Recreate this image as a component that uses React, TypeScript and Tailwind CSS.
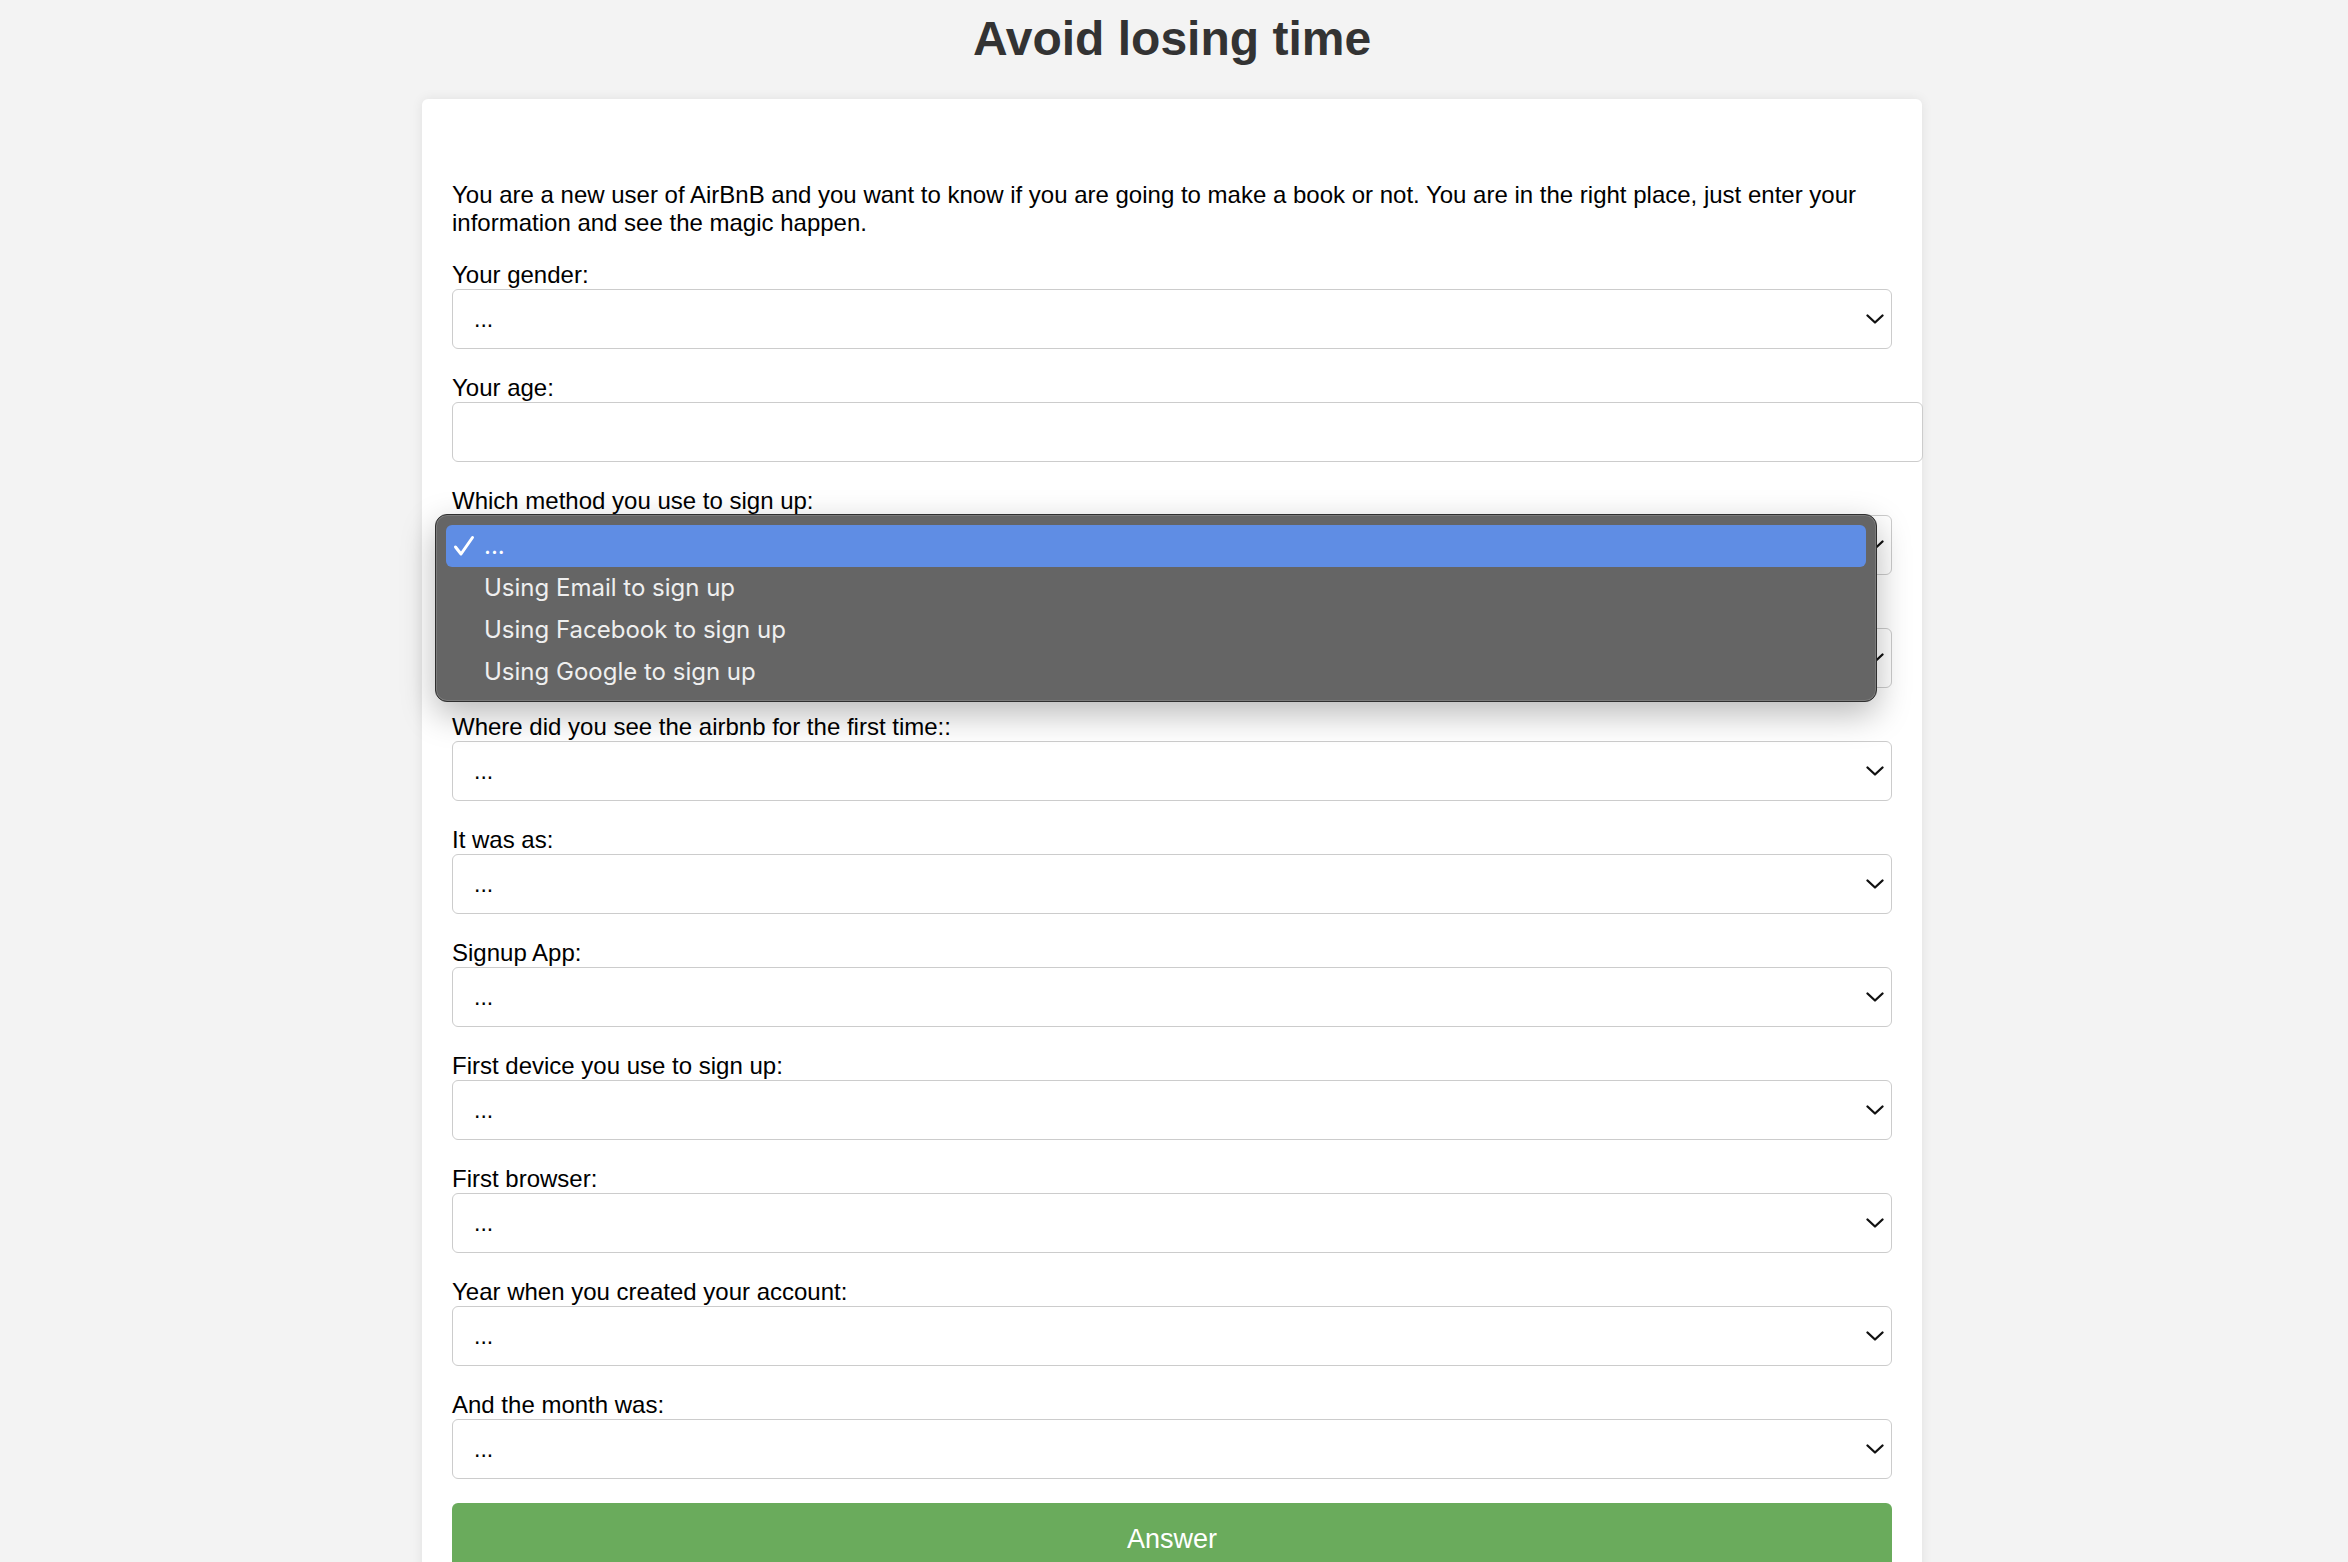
import React from "react";

const Chevron = () => (
  <svg
    width="18"
    height="10"
    viewBox="0 0 18 10"
    className="absolute right-[7px] top-1/2 -translate-y-1/2"
  >
    <path
      d="M1.5 1.5 L9 8.5 L16.5 1.5"
      fill="none"
      stroke="#111"
      strokeWidth="2.3"
      strokeLinecap="round"
      strokeLinejoin="round"
    />
  </svg>
);

const Check = () => (
  <svg width="22" height="22" viewBox="0 0 22 22" className="shrink-0">
    <path
      d="M2.5 12 L8 19 L19.5 2.5"
      fill="none"
      stroke="#fff"
      strokeWidth="3"
      strokeLinecap="round"
      strokeLinejoin="round"
    />
  </svg>
);

const FakeSelect = ({ children }: { children?: React.ReactNode }) => (
  <div className="relative h-[60px] w-full rounded-[6px] border border-[#cccccc] bg-white">
    <div className="flex h-full items-center pl-[21px] text-[23px] text-black">...</div>
    <Chevron />
    {children}
  </div>
);

const Popup = () => {
  const items = ["Using Email to sign up", "Using Facebook to sign up", "Using Google to sign up"];
  return (
    <div
      className="absolute left-[-18px] top-[-2px] z-10 w-[1442px] rounded-[12px] border border-[#2f2f2f] bg-[#656565] px-[10px] pb-[8px] pt-[10px] shadow-[inset_0_0_0_1px_rgba(255,255,255,0.14),0_12px_34px_rgba(0,0,0,0.28)]"
      style={{ fontFamily: "Inter, 'Open Sans', sans-serif" }}
    >
      <div className="flex h-[42px] items-center rounded-[6px] bg-[#5f8de4] pl-[7px] text-[24px] text-white">
        <Check />
        <span className="ml-[9px]">...</span>
      </div>
      {items.map((t) => (
        <div key={t} className="flex h-[42px] items-center pl-[38px] text-[24px] text-[#efefef]">
          {t}
        </div>
      ))}
    </div>
  );
};

const Field = ({ label, children }: { label: string; children: React.ReactNode }) => (
  <div className="mb-[25px]">
    <div className="h-[28px] text-[24px] leading-[28px] text-black">{label}</div>
    {children}
  </div>
);

export default function App() {
  const rest = [
    "Where did you see the airbnb for the first time::",
    "It was as:",
    "Signup App:",
    "First device you use to sign up:",
    "First browser:",
    "Year when you created your account:",
    "And the month was:",
  ];
  return (
    <div
      className="h-[1562px] overflow-hidden bg-[#f3f3f3] pr-[4px]"
      style={{ fontFamily: "'Liberation Sans', Arial, sans-serif" }}
    >
      <h1 className="pt-[11px] text-center text-[48px] font-bold leading-[56px] text-[#333333]">
        Avoid losing time
      </h1>
      <div className="mx-auto mt-[32px] w-[1500px] rounded-[6px] bg-white px-[30px] pb-[40px] pt-[82px] shadow-[0_0_12px_rgba(0,0,0,0.08)]">
        <p className="mb-[24px] text-[24px] leading-[28px] text-black">
          You are a new user of AirBnB and you want to know if you are going to make a book or not. You are in the
          right place, just enter your information and see the magic happen.
        </p>
        <Field label="Your gender:">
          <FakeSelect />
        </Field>
        <Field label="Your age:">
          <div className="h-[60px] w-[1471px] rounded-[6px] border border-[#cccccc] bg-white" />
        </Field>
        <Field label="Which method you use to sign up:">
          <FakeSelect>
            <Popup />
          </FakeSelect>
        </Field>
        <Field label="Your language:">
          <FakeSelect />
        </Field>
        {rest.map((l) => (
          <Field key={l} label={l}>
            <FakeSelect />
          </Field>
        ))}
        <div className="-mt-[1px] flex h-[72px] w-full items-center justify-center rounded-[6px] bg-[#6aab5c] text-[27px] text-white">
          Answer
        </div>
      </div>
    </div>
  );
}
